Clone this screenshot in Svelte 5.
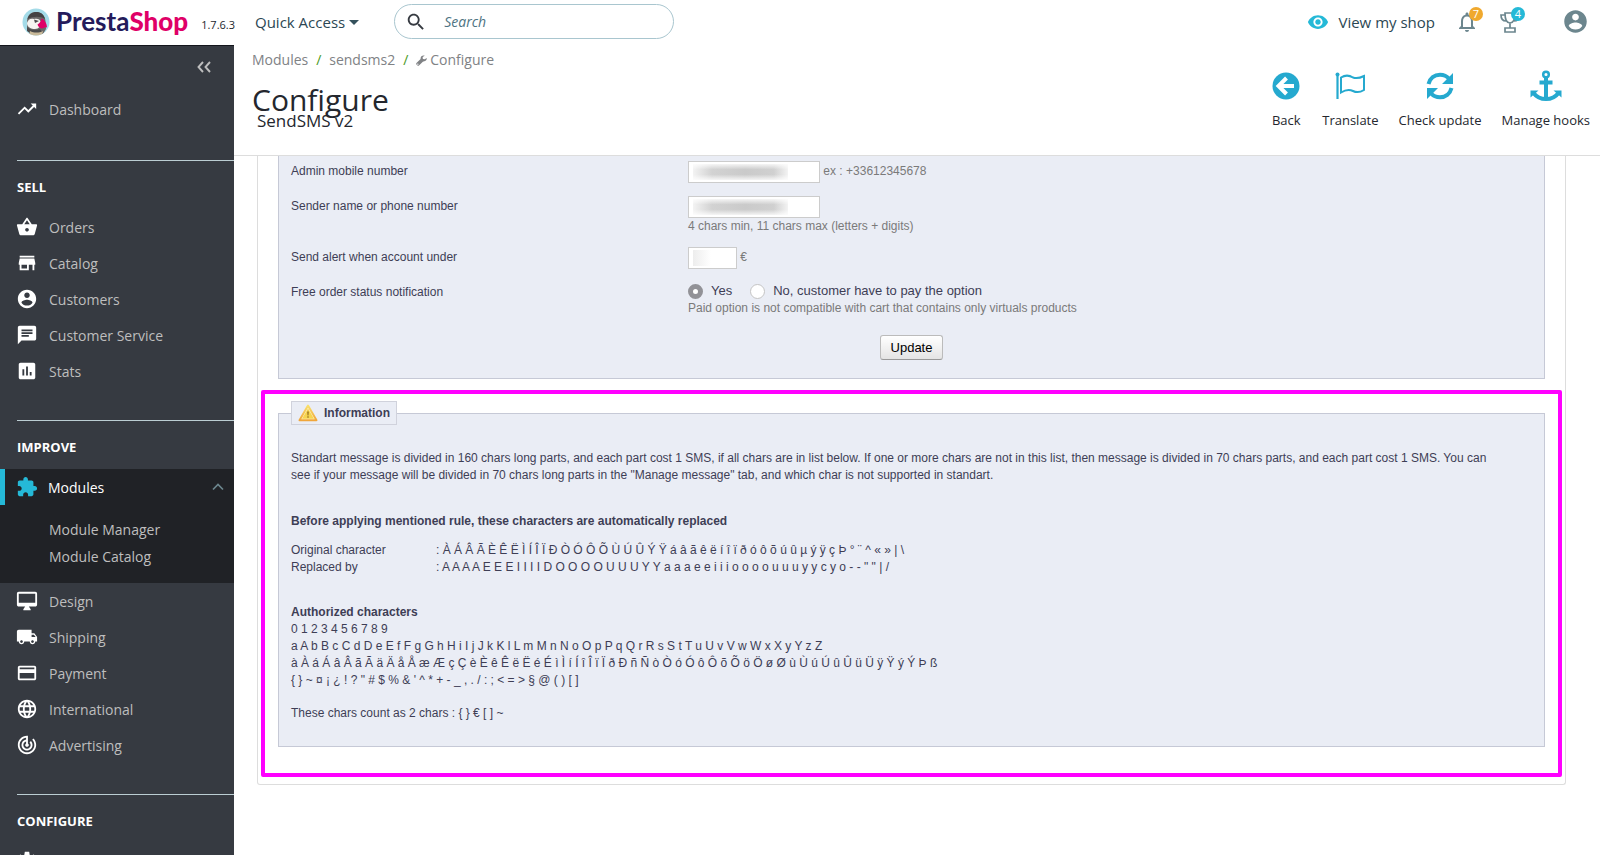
<script>
  const icons = {
    trend: 'M16 6l2.29 2.29-4.88 4.88-4-4L2 16.59 3.41 18l6-6 4 4 6.3-6.29L22 12V6z',
    basket: 'M17.21 9l-4.38-6.56c-.19-.28-.51-.42-.83-.42-.32 0-.64.14-.83.43L6.79 9H2c-.55 0-1 .45-1 1 0 .09.01.18.04.27l2.54 9.27c.23.84 1 1.46 1.92 1.46h13c.92 0 1.69-.62 1.93-1.46l2.54-9.27L23 10c0-.55-.45-1-1-1h-4.79zM9 9l3-4.4L15 9H9zm3 8c-1.1 0-2-.9-2-2s.9-2 2-2 2 .9 2 2-.9 2-2 2z',
    store: 'M20 4H4v2h16V4zm1 10v-2l-1-5H4l-1 5v2h1v6h10v-6h4v6h2v-6h1zm-9 4H6v-4h6v4z',
    person: 'M12 2C6.48 2 2 6.48 2 12s4.48 10 10 10 10-4.48 10-10S17.52 2 12 2zm0 3c1.66 0 3 1.34 3 3s-1.34 3-3 3-3-1.34-3-3 1.34-3 3-3zm0 14.2c-2.5 0-4.71-1.28-6-3.22.03-1.99 4-3.08 6-3.08 1.99 0 5.97 1.09 6 3.08-1.29 1.94-3.5 3.22-6 3.22z',
    chat: 'M20 2H4c-1.1 0-1.99.9-1.99 2L2 22l4-4h14c1.1 0 2-.9 2-2V4c0-1.1-.9-2-2-2zM6 9h12v2H6V9zm8 5H6v-2h8v2zm4-6H6V6h12v2z',
    stats: 'M19 3H5c-1.1 0-2 .9-2 2v14c0 1.1.9 2 2 2h14c1.1 0 2-.9 2-2V5c0-1.1-.9-2-2-2zM9 17H7v-7h2v7zm4 0h-2V7h2v10zm4 0h-2v-4h2v4z',
    puzzle: 'M20.5 11H19V7c0-1.1-.9-2-2-2h-4V3.5C13 2.12 11.88 1 10.5 1S8 2.12 8 3.5V5H4c-1.1 0-1.99.9-1.99 2v3.8H3.5c1.49 0 2.7 1.21 2.7 2.7s-1.21 2.7-2.7 2.7H2V20c0 1.1.9 2 2 2h3.8v-1.5c0-1.49 1.21-2.7 2.7-2.7 1.49 0 2.7 1.21 2.7 2.7V22H17c1.1 0 2-.9 2-2v-4h1.500c1.38 0 2.5-1.12 2.500-2.500S21.88 11 20.500 11z',
    desktop: 'M21 2H3c-1.1 0-2 .9-2 2v12c0 1.1.9 2 2 2h7l-2 3v1h8v-1l-2-3h7c1.1 0 2-.9 2-2V4c0-1.1-.9-2-2-2zm0 12H3V4h18v10z',
    truck: 'M20 8h-3V4H3c-1.1 0-2 .9-2 2v11h2c0 1.66 1.34 3 3 3s3-1.34 3-3h6c0 1.66 1.34 3 3 3s3-1.34 3-3h2v-5l-3-4zM6 18.500c-.83 0-1.500-.67-1.500-1.500s.67-1.500 1.500-1.500 1.500.67 1.500 1.500-.67 1.500-1.500 1.500zm13.500-9l1.960 2.500H17V9.500h2.500zm-1.500 9c-.83 0-1.500-.67-1.500-1.500s.67-1.500 1.500-1.500 1.500.67 1.500 1.500-.67 1.500-1.500 1.500z',
    card: 'M20 4H4c-1.110 0-1.990.89-1.990 2L2 18c0 1.110.89 2 2 2h16c1.110 0 2-.89 2-2V6c0-1.110-.89-2-2-2zm0 14H4v-6h16v6zm0-10H4V6h16v2z',
    globe: 'M11.99 2C6.47 2 2 6.48 2 12s4.470 10 9.990 10C17.520 22 22 17.520 22 12S17.520 2 11.990 2zm6.930 6h-2.950c-.32-1.250-.78-2.450-1.380-3.560 1.840.63 3.370 1.910 4.330 3.560zM12 4.040c.83 1.200 1.480 2.530 1.910 3.960h-3.820c.43-1.430 1.080-2.760 1.910-3.960zM4.260 14C4.100 13.360 4 12.690 4 12s.1-1.360.26-2h3.380c-.08.66-.14 1.320-.14 2 0 .68.060 1.340.14 2H4.260zm.82 2h2.950c.32 1.250.78 2.450 1.380 3.560-1.840-.63-3.370-1.900-4.330-3.560zm2.950-8H5.080c.96-1.660 2.490-2.930 4.330-3.560C8.810 5.550 8.350 6.750 8.030 8zM12 19.960c-.83-1.200-1.480-2.530-1.910-3.960h3.820c-.43 1.430-1.080 2.760-1.910 3.960zM14.340 14H9.660c-.09-.66-.16-1.320-.16-2 0-.68.070-1.350.16-2h4.680c.09.65.16 1.320.16 2 0 .68-.07 1.340-.16 2zm.25 5.560c.6-1.110 1.060-2.310 1.380-3.560h2.950c-.96 1.650-2.490 2.930-4.330 3.560zM16.360 14c.08-.66.14-1.320.14-2 0-.68-.06-1.340-.14-2h3.380c.16.64.26 1.310.26 2s-.1 1.360-.26 2h-3.380z',
    radar: 'M19.070 4.930l-1.410 1.410C19.100 7.790 20 9.790 20 12c0 4.420-3.580 8-8 8s-8-3.580-8-8c0-4.080 3.050-7.440 7-7.930v2.020C8.160 6.570 6 9.030 6 12c0 3.310 2.690 6 6 6s6-2.690 6-6c0-1.660-.67-3.160-1.760-4.240l-1.410 1.410C15.550 9.900 16 10.900 16 12c0 2.210-1.790 4-4 4s-4-1.790-4-4c0-1.860 1.280-3.410 3-3.860v2.140c-.6.35-1 .98-1 1.720 0 1.100.9 2 2 2s2-.9 2-2c0-.74-.4-1.380-1-1.720V2h-1C6.480 2 2 6.480 2 12s4.480 10 10 10 10-4.480 10-10c0-2.760-1.120-5.260-2.930-7.070z',
    gear: 'M19.430 12.980c.04-.32.07-.64.07-.98s-.03-.66-.07-.98l2.110-1.650c.19-.15.24-.42.12-.64l-2-3.460c-.12-.22-.39-.3-.61-.22l-2.490 1c-.52-.4-1.080-.73-1.690-.98l-.38-2.650C14.460 2.180 14.250 2 14 2h-4c-.25 0-.46.18-.49.42l-.38 2.650c-.61.25-1.170.59-1.690.98l-2.490-1c-.23-.09-.49 0-.61.22l-2 3.460c-.13.22-.07.49.12.64l2.110 1.650c-.04.32-.07.65-.07.98s.03.66.07.98l-2.110 1.650c-.19.15-.24.42-.12.64l2 3.460c.12.22.39.3.61.22l2.490-1c.52.4 1.080.73 1.690.98l.38 2.650c.03.24.24.42.49.42h4c.25 0 .46-.18.49-.42l.38-2.650c.61-.25 1.170-.59 1.690-.98l2.490 1c.23.09.49 0 .61-.22l2-3.460c.12-.22.07-.49-.12-.64l-2.110-1.650zM12 15.500c-1.930 0-3.500-1.570-3.500-3.500s1.570-3.500 3.500-3.500 3.500 1.570 3.500 3.500-1.570 3.500-3.500 3.500z',
    search: 'M15.500 14h-.79l-.28-.27C15.410 12.590 16 11.110 16 9.500 16 5.910 13.090 3 9.500 3S3 5.910 3 9.500 5.910 16 9.500 16c1.610 0 3.090-.59 4.230-1.570l.27.28v.79l5 4.990L20.490 19l-4.990-5zm-6 0C7.010 14 5 11.990 5 9.500S7.010 5 9.500 5 14 7.010 14 9.500 11.990 14 9.500 14z',
    eye: 'M12 4.500C7 4.500 2.730 7.610 1 12c1.730 4.390 6 7.500 11 7.500s9.270-3.110 11-7.500c-1.730-4.390-6-7.500-11-7.500zM12 17c-2.760 0-5-2.240-5-5s2.240-5 5-5 5 2.240 5 5-2.240 5-5 5zm0-8c-1.660 0-3 1.340-3 3s1.340 3 3 3 3-1.340 3-3-1.340-3-3-3z',
    bell: 'M12 22c1.100 0 2-.9 2-2h-4c0 1.100.89 2 2 2zm6-6v-5c0-3.070-1.640-5.640-4.500-6.320V4c0-.83-.67-1.500-1.500-1.500s-1.500.67-1.500 1.500v.68C7.630 5.360 6 7.920 6 11v5l-2 2v1h16v-1l-2-2zm-2 1H8v-6c0-2.480 1.510-4.500 4-4.500s4 2.020 4 4.500v6z'
  };

  const sell = [
    ['basket', 'Orders'], ['store', 'Catalog'], ['person', 'Customers'],
    ['chat', 'Customer Service'], ['stats', 'Stats']
  ];
  const improve = [
    ['desktop', 'Design'], ['truck', 'Shipping'], ['card', 'Payment'],
    ['globe', 'International'], ['radar', 'Advertising']
  ];

  const replaced = [
    ['Original character', ': À Á Â Ã È Ê Ë Ì Í Î Ï Ð Ò Ó Ô Õ Ù Ú Û Ý Ÿ á â ã ê ë í î ï ð ó ô õ ú û µ ý ÿ ç Þ ° ¨ ^ « » | \\'],
    ['Replaced by', ': A A A A E E E I I I I D O O O O U U U Y Y a a a e e i i i o o o o u u u y y c y o - - " " | /']
  ];
  const authorized = [
    '0 1 2 3 4 5 6 7 8 9',
    'a A b B c C d D e E f F g G h H i I j J k K l L m M n N o O p P q Q r R s S t T u U v V w W x X y Y z Z',
    'à À á Á â Â ã Ã ä Ä å Å æ Æ ç Ç è È ê Ê ë Ë é É ì Ì í Í î Î ï Ï ð Ð ñ Ñ ò Ò ó Ó ô Ô õ Õ ö Ö ø Ø ù Ù ú Ú û Û ü Ü ÿ Ÿ ý Ý Þ ß',
    '{ } ~ ¤ ¡ ¿ ! ? " # $ % & \' ^ * + - _ , . / : ; < = > § @ ( ) [ ]'
  ];
  const double = '{ } € [ ] ~';

  let free = $state('yes');
</script>

{#snippet icon(name, size = 22)}
  <svg class="icon" width={size} height={size} viewBox="0 0 24 24" fill="currentColor" aria-hidden="true"><path d={icons[name]} /></svg>
{/snippet}

{#snippet links(items)}
  <ul>
    {#each items as [name, label]}
      <li><a class="item" href="#{name}">{@render icon(name)}{label}</a></li>
    {/each}
  </ul>
{/snippet}

<div class="page">
  <header class="top">
    <a class="logo" href="#home">
      <svg width="28" height="28" viewBox="0 0 28 28" aria-hidden="true">
        <defs><clipPath id="disc"><circle cx="14" cy="14" r="13.500" /></clipPath></defs>
        <g clip-path="url(#disc)">
          <rect width="28" height="28" fill="#a4dbe8" />
          <path d="M5 14C5 7 9 4 14 4c6 0 9 4 9.500 9l.5 8-3 5H8l-3-5z" fill="#6a6868" />
          <path d="M5.500 11C7 6 10 4 14.500 4c4 0 7.500 2.500 8.500 7-4-3-12-3-17.500 0z" fill="#454344" />
          <path d="M5 15c1-4 4-5 7-4 3-1 6 0 7 3 0 4-2 7-6 7s-8-2-8-6z" fill="#f6f4f1" />
          <path d="M12 11.500l5 1.500-4 2z" fill="#4b4a4b" />
          <path d="M5 19c3 3 8 4 13 2l2 3c-5 3-11 2-15-1z" fill="#4b4a4b" />
          <path d="M8 23c4 2 9 2 13 0l-1 5H7z" fill="#c9b999" />
          <path d="M19.500 10.500c3 1 5.500 5 5.500 9-3-1-3 1-5 1-2 0-4-2-4.500-4 2-1 3.500-3 4-6z" fill="#df0067" />
        </g>
      </svg>
      <span class="word">Presta<b>Shop</b></span>
    </a>
    <span class="version">1.7.6.3</span>
    <button class="quick">Quick Access <i class="caret"></i></button>
    <label class="search">{@render icon('search', 22)}<input type="search" placeholder="Search" aria-label="Search" /></label>
    <nav class="tools">
      <a class="shop" href="#shop"><span class="cyan">{@render icon('eye', 22)}</span>View my shop</a>
      <button class="tool bell" aria-label="Notifications">{@render icon('bell', 24)}<span class="badge amber">7</span></button>
      <button class="tool cup" aria-label="Achievements">
        <svg width="22" height="24" viewBox="0 0 22 24" fill="none" stroke="currentColor" stroke-width="1.700" aria-hidden="true">
          <path d="M6 3h10c0 7-2 10-5 10S6 10 6 3zM6 5H2c0 4 2 6 5 6M16 5h4c0 4-2 6-5 6M11 13v5M6 18h10v4H6z" />
        </svg>
        <span class="badge">4</span>
      </button>
      <button class="tool user" aria-label="Account">{@render icon('person', 27)}</button>
    </nav>
  </header>

  <div class="body">
    <aside>
      <button class="collapse" aria-label="Collapse menu">
        <svg width="14" height="12" viewBox="0 0 14 12" fill="none" stroke="currentColor" stroke-width="1.900" aria-hidden="true"><path d="M6 1L1.500 6 6 11M13 1L8.500 6 13 11" /></svg>
      </button>
      <a class="item" href="#dashboard">{@render icon('trend')}Dashboard</a>
      <section>
        <h2>SELL</h2>
        {@render links(sell)}
      </section>
      <section>
        <h2>IMPROVE</h2>
        <div class="open">
          <a class="item active" href="#modules">{@render icon('puzzle')}Modules
            <svg class="chev" width="12" height="8" viewBox="0 0 12 8" fill="none" stroke="currentColor" stroke-width="1.700" aria-hidden="true"><path d="M1 6.500L6 1.500 11 6.500" /></svg>
          </a>
          <a class="sub" href="#manager">Module Manager</a>
          <a class="sub" href="#catalog">Module Catalog</a>
        </div>
        {@render links(improve)}
      </section>
      <section>
        <h2>CONFIGURE</h2>
        <a class="item" href="#parameters" aria-label="Parameters">{@render icon('gear')}</a>
      </section>
    </aside>

    <main>
      <div class="head">
        <div class="titles">
          <nav class="crumbs">
            <a href="#modules">Modules</a><i>/</i><a href="#sendsms2">sendsms2</a><i>/</i>
            <a class="wrench" href="#configure"><svg width="11" height="11" viewBox="0 0 24 24" fill="currentColor" aria-hidden="true"><path d="M23.500 6.500l-4.500 3-4-1-.5-4 4.500-3C14 0 9.500 3 10 8.500L1 17.500c-2 3 2.500 7.500 5.500 5.500l9-9c5 1 8.500-3 8-7.500zM4 21.500a1.500 1.500 0 110-3 1.500 1.500 0 010 3z" /></svg>Configure</a>
          </nav>
          <h1>Configure</h1>
          <p>SendSMS v2</p>
        </div>
        <nav class="actions">
          <a href="#back">
            <svg width="32" height="32" viewBox="0 0 32 32" aria-hidden="true"><circle cx="16" cy="16" r="13.500" fill="currentColor" /><path d="M16.500 8L8.500 16l8 8M9 16h15" fill="none" stroke="#fff" stroke-width="4" /></svg>
            <span>Back</span>
          </a>
          <a href="#translate">
            <svg width="32" height="32" viewBox="0 0 32 32" fill="none" stroke="currentColor" stroke-width="2" aria-hidden="true"><path d="M3.500 4v25" stroke-width="2.200" /><circle cx="3.500" cy="4.500" r="2" fill="currentColor" stroke="none" /><path d="M7 7.500c4-2.500 8-2.500 12 0 4 1.500 7 .5 11-1.500v14c-4 2.500-7 3-11 1-4-2-8-1-12 1.500z" /></svg>
            <span>Translate</span>
          </a>
          <a href="#update">
            <svg width="32" height="32" viewBox="0 0 32 32" aria-hidden="true"><path d="M4.500 14C6 8 10.500 4.700 16 4.700c4 0 7 1.600 9 4M27.500 18C26 24 21.500 27.300 16 27.300c-4 0-7-1.600-9-4" fill="none" stroke="currentColor" stroke-width="4" /><path d="M29 3v11H18zM3 29V18h11z" fill="currentColor" /></svg>
            <span>Check update</span>
          </a>
          <a href="#hooks">
            <svg width="32" height="32" viewBox="0 0 32 32" fill="none" stroke="currentColor" aria-hidden="true"><circle cx="16" cy="4.500" r="2.800" stroke-width="2.500" /><path d="M16 7v21M9.500 12.500h13" stroke-width="4" /><path d="M3.500 23c3 4 7 6 12.500 6s9.500-2 12.500-6" stroke-width="4" /><path d="M.5 20.500h8l-8 7zM31.500 20.500h-8l8 7z" fill="currentColor" stroke="none" /></svg>
            <span>Manage hooks</span>
          </a>
        </nav>
      </div>

      <div class="panel">
        <form class="box form" onsubmit={(e) => e.preventDefault()}>
          <div class="row">
            <label for="mobile">Admin mobile number</label>
            <div><input id="mobile" class="text masked" type="text" /> <small>ex : +33612345678</small></div>
          </div>
          <div class="row sender">
            <label for="sender">Sender name or phone number</label>
            <div><input id="sender" class="text masked" type="text" /><small class="hint">4 chars min, 11 chars max (letters + digits)</small></div>
          </div>
          <div class="row">
            <label for="alert">Send alert when account under</label>
            <div><input id="alert" class="text short" type="text" /> <small>€</small></div>
          </div>
          <div class="row">
            <span>Free order status notification</span>
            <div>
              <div class="radios">
                <label><input type="radio" name="free" value="yes" bind:group={free} />Yes</label>
                <label><input type="radio" name="free" value="no" bind:group={free} />No, customer have to pay the option</label>
              </div>
              <small class="hint">Paid option is not compatible with cart that contains only virtuals products</small>
            </div>
          </div>
          <button class="update">Update</button>
        </form>

        <div class="highlight">
          <fieldset class="box info">
            <legend>
              <svg width="20" height="18" viewBox="0 0 20 18" aria-hidden="true">
                <defs><linearGradient id="warn" x1="0" y1="0" x2="0" y2="1"><stop offset="0" stop-color="#f9e06c" /><stop offset="1" stop-color="#f0a63a" /></linearGradient></defs>
                <path d="M10 1.500L18.500 16.200h-17z" fill="#fdf3d0" stroke="url(#warn)" stroke-width="2" stroke-linejoin="round" />
                <path d="M10 4.500l6 10.200H4z" fill="#f6d550" />
                <path d="M9 7.500h2l-.4 4H9.400zM9.200 12.300h1.600v1.500H9.200z" fill="#a8842a" />
              </svg>
              Information
            </legend>
            <p class="intro">Standart message is divided in 160 chars long parts, and each part cost 1 SMS, if all chars are in list below. If one or more chars are not in this list, then message is divided in 70 chars parts, and each part cost 1 SMS. You can see if your message will be divided in 70 chars long parts in the "Manage message" tab, and which char is not supported in standart.</p>
            <h3>Before applying mentioned rule, these characters are automatically replaced</h3>
            <table>
              <tbody>
                {#each replaced as [name, chars]}
                  <tr><th scope="row">{name}</th><td>{chars}</td></tr>
                {/each}
              </tbody>
            </table>
            <h3>Authorized characters</h3>
            {#each authorized as line}
              <p>{line}</p>
            {/each}
            <p class="double">These chars count as 2 chars : {double}</p>
          </fieldset>
        </div>
      </div>
    </main>
  </div>
</div>

<style>
  :global(body) { margin: 0; background: #fff; }
  .page {
    height: 100vh;
    display: flex;
    flex-direction: column;
    overflow: hidden;
    font-family: "Open Sans", sans-serif;
    font-size: 14px;
    color: #24272e;
  }
  a { color: inherit; text-decoration: none; }
  button { font: inherit; color: inherit; background: none; border: 0; padding: 0; cursor: pointer; }
  h1, h2, h3, p, ul { margin: 0; padding: 0; font-weight: 400; list-style: none; }
  svg { display: block; flex: none; }

  .top { display: flex; align-items: center; height: 43px; flex: none; padding: 0 11px 2px 22px; }
  .logo { display: flex; align-items: center; gap: 6px; }
  .word { font: 700 26px/43px Lato, sans-serif; color: #251b5b; }
  .word b { color: #df0067; }
  .version { font-size: 11px; margin: 6px 0 0 13px; }
  .quick { display: flex; align-items: center; gap: 4px; margin-left: 20px; font-size: 15px; color: #2b4753; }
  .caret { border: 5px solid transparent; border-top-color: #34515c; border-bottom: 0; margin-top: 2px; }
  .search {
    display: flex; align-items: center; gap: 17px; box-sizing: border-box;
    width: 280px; height: 35px; margin-left: 35px; padding: 0 10px;
    border: 1px solid #a9c6cf; border-radius: 18px; color: #363a41;
  }
  .search input { flex: 1; min-width: 0; border: 0; outline: 0; background: none; padding: 0; font: italic 14px "Open Sans", sans-serif; }
  .search input::placeholder { color: #4d7382; opacity: 1; }
  .tools { display: flex; align-items: center; margin-left: auto; color: #6c868e; }
  .shop { display: flex; align-items: center; gap: 9px; font-size: 15px; color: #2b4753; }
  .cyan { color: #25b9d7; }
  .tool { position: relative; }
  .bell { margin-left: 20px; }
  .cup { margin-left: 20px; }
  .user { margin-left: 41px; }
  .badge {
    position: absolute; top: -3px; right: -4px; width: 14px; height: 14px; border-radius: 50%;
    background: #25b9d7; color: #fff; font-size: 11px; line-height: 14px; text-align: center;
  }
  .amber { background: #f0a92e; }

  .body { display: flex; flex: 1; min-height: 0; }
  aside { width: 234px; flex: none; background: #363a41; color: #bebebe; overflow: hidden; box-sizing: border-box; border-top: 1px solid #14161c; }
  .collapse { display: block; margin: 15px 23px 0 auto; color: #bebebe; }
  .collapse + .item { margin: 18px 0 33px; }
  .item { display: flex; align-items: center; gap: 11px; height: 36px; padding-left: 16px; color: #bebebe; }
  .item .icon { color: #fff; }
  section { padding-bottom: 31px; }
  section::before { content: ""; display: block; height: 1px; margin-left: 17px; background: #bbcdd2; }
  h2 { padding: 16px 0 12px 17px; line-height: 20px; font-size: 13px; font-weight: 700; color: #fff; }
  .open { background: #202226; padding-bottom: 13px; }
  .active { padding-left: 11px; margin-bottom: 11px; border-left: 5px solid #25b9d7; gap: 10px; color: #fff; }
  .item.active .icon { color: #25b9d7; }
  .chev { margin: 0 10px 0 auto; color: #6c868e; }
  .sub { display: block; padding-left: 49px; line-height: 27px; }

  main { flex: 1; min-width: 0; }
  .head { display: flex; justify-content: space-between; height: 110px; border-bottom: 1px solid #ddd; }
  .titles { padding: 5px 0 0 18px; }
  .crumbs { display: flex; line-height: 20px; color: #808285; }
  .crumbs i { width: 21px; text-align: center; font-style: normal; color: #4a9a1b; }
  .wrench { display: flex; align-items: center; gap: 3px; }
  h1 { font-size: 30px; line-height: 40px; margin-top: 10px; }
  .titles p { font-size: 17px; line-height: 20px; margin: -9px 0 0 5px; }
  .actions { display: flex; gap: 20px; padding: 25px 10px 0 0; color: #25a9cf; }
  .actions a { display: flex; flex-direction: column; align-items: center; gap: 8px; font-size: 13px; }
  .actions span { color: #24272e; line-height: 20px; }

  .panel {
    margin: 0 34px 0 23px; padding-bottom: 7px;
    border: 1px solid #ddd; border-top: 0; border-radius: 0 0 3px 3px;
    font: 12px/17px "Liberation Sans", Arial, sans-serif; color: #3e3e55;
  }
  .box { background: #eaedf5; border: 1px solid #c6c9d6; box-sizing: border-box; }
  .form { margin: 0 20px; padding: 5px 12px 18px; border-top: 0; display: flex; flex-direction: column; }
  .row { display: grid; grid-template-columns: 397px 1fr; margin-bottom: 13px; }
  .row > label, .row > span { line-height: 20px; }
  .sender { margin-bottom: 12px; }
  small { font-size: 12px; color: #7a7a7a; }
  .hint { display: block; line-height: 17px; }
  .text {
    box-sizing: border-box; width: 132px; height: 22px; padding: 0 4px; vertical-align: top;
    border: 1px solid #ccc; background: #fff; font: inherit;
  }
  .text + small { line-height: 20px; }
  .masked {
    background:
      linear-gradient(#fffc, #fff0 35%, #fff0 65%, #fffc) 4px 2px / 95px 16px no-repeat,
      linear-gradient(90deg, #f3f3f3, #d2d2d2 20%, #cacaca 55%, #d0d0d0 85%, #f3f3f3) 4px 2px / 95px 16px no-repeat,
      #fff;
  }
  .short { width: 49px; background: linear-gradient(90deg, #ededed, #fff) 4px 2px / 18px 16px no-repeat, #fff; }
  .text + .hint { line-height: 17px; }
  .radios { display: flex; gap: 18px; font-size: 13px; line-height: 18px; }
  .radios label { display: flex; align-items: center; gap: 8px; }
  .radios input { appearance: none; width: 15px; height: 15px; margin: 0; border: 1px solid #c4c4c4; border-radius: 50%; background: #fff; }
  .radios input:checked { border: 5px solid #929297; }
  .update {
    align-self: center; margin-top: 5px; padding: 0 10px; line-height: 23px; font-size: 13px; color: #000;
    border: 1px solid #bbb; border-bottom-color: #999; border-radius: 3px; background: linear-gradient(#fff, #e4e4e4);
  }

  .highlight { margin: 11px 3px 0; padding: 7px 13px 26px; border: 4px solid #f0f; border-radius: 2px; }
  .info { margin: 0; padding: 25px 12px 24px; min-width: 0; }
  legend { display: flex; align-items: center; gap: 6px; padding: 0 6px; line-height: 22px; font-weight: 700; background: #eaedf5; border: 1px solid #d0d2dc; }
  .intro { padding-right: 28px; }
  h3 { font-size: 12px; font-weight: 700; }
  .intro + h3 { margin-top: 29px; }
  table { border-collapse: collapse; margin: 12px 0 28px; }
  th { width: 145px; font-weight: 400; text-align: left; }
  th, td { padding: 0; }
  .double { margin-top: 16px; }
</style>
